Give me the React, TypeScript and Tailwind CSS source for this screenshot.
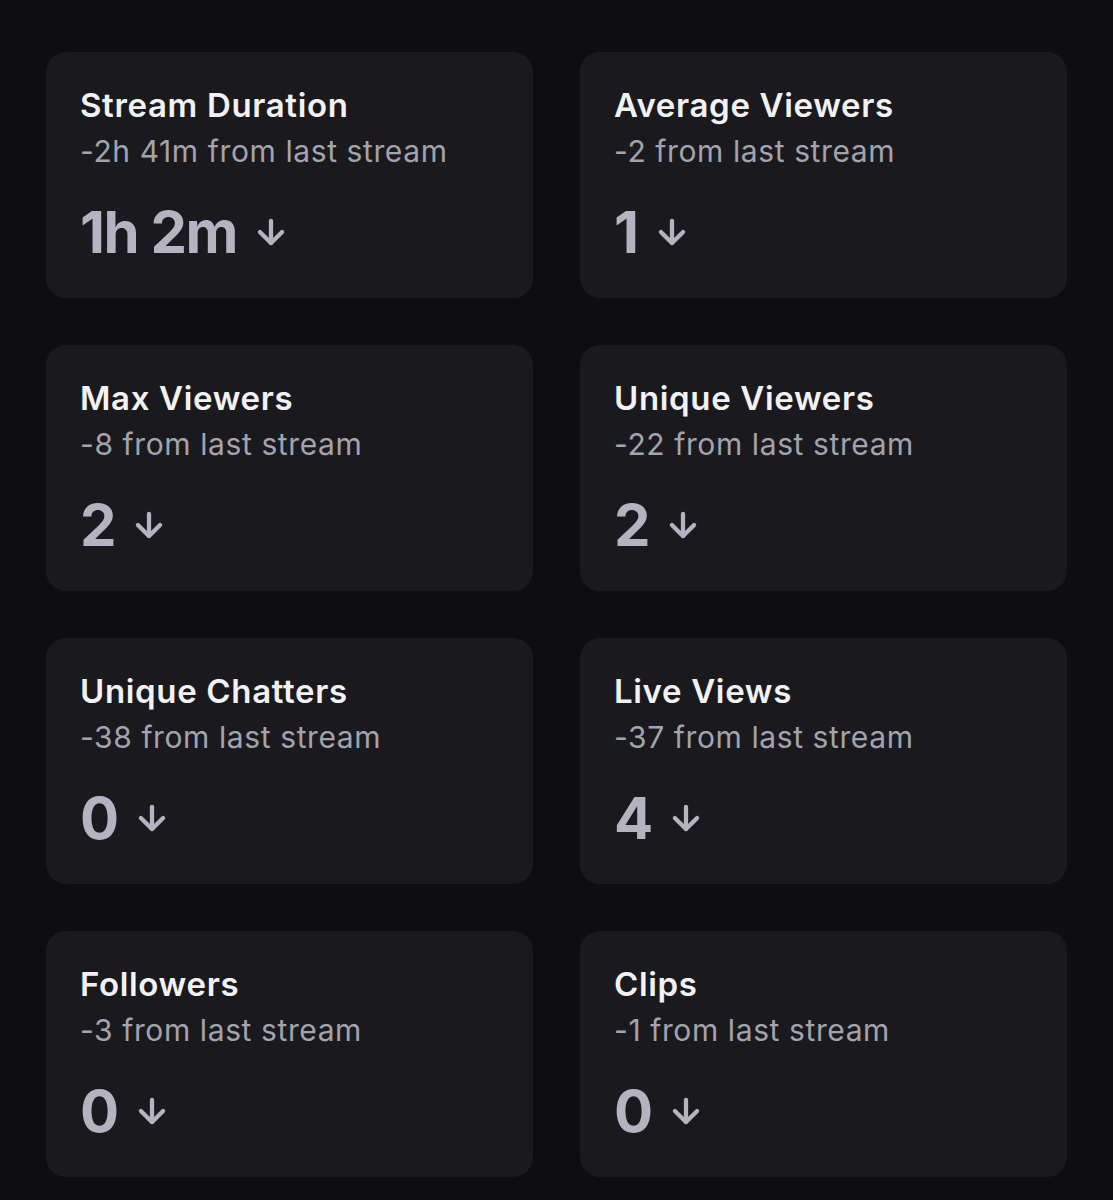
import { ArrowDown } from "lucide-react"

type Stat = {
  title: string
  delta: string
  value: string
}

const stats: Stat[] = [
  { title: "Stream Duration", delta: "-2h 41m", value: "1h 2m" },
  { title: "Average Viewers", delta: "-2", value: "1" },
  { title: "Max Viewers", delta: "-8", value: "2" },
  { title: "Unique Viewers", delta: "-22", value: "2" },
  { title: "Unique Chatters", delta: "-38", value: "0" },
  { title: "Live Views", delta: "-37", value: "4" },
  { title: "Followers", delta: "-3", value: "0" },
  { title: "Clips", delta: "-1", value: "0" },
]

function StatCard({ title, delta, value }: Stat) {
  return (
    <div className="h-[246px] rounded-[20px] bg-[#1a1a1e] px-[34px] pt-[33px]">
      <p className="text-[33px] font-semibold leading-[40px] tracking-[0.02em] text-[#f2f2f4]">
        {title}
      </p>
      <p className="mt-[8px] text-[30px] leading-[36px] tracking-[0.02em] text-[#a3a3ad]">
        {delta} from last stream
      </p>
      <div className="mt-[33px] flex items-center gap-[15px] text-[#b4b3bf]">
        <span className="text-[58px] font-bold leading-[60px] tracking-[-0.025em]">
          {value}
        </span>
        <ArrowDown className="size-[38px]" strokeWidth={2.7} />
      </div>
    </div>
  )
}

export default function App() {
  return (
    <div
      className="min-h-[1200px] bg-[#0e0e10] px-[46px] pt-[52px]"
      style={{ fontFamily: "Inter, 'Noto Sans', sans-serif" }}
    >
      <div className="grid grid-cols-2 gap-x-[47px] gap-y-[47px]">
        {stats.map((s) => (
          <StatCard key={s.title} {...s} />
        ))}
      </div>
    </div>
  )
}
